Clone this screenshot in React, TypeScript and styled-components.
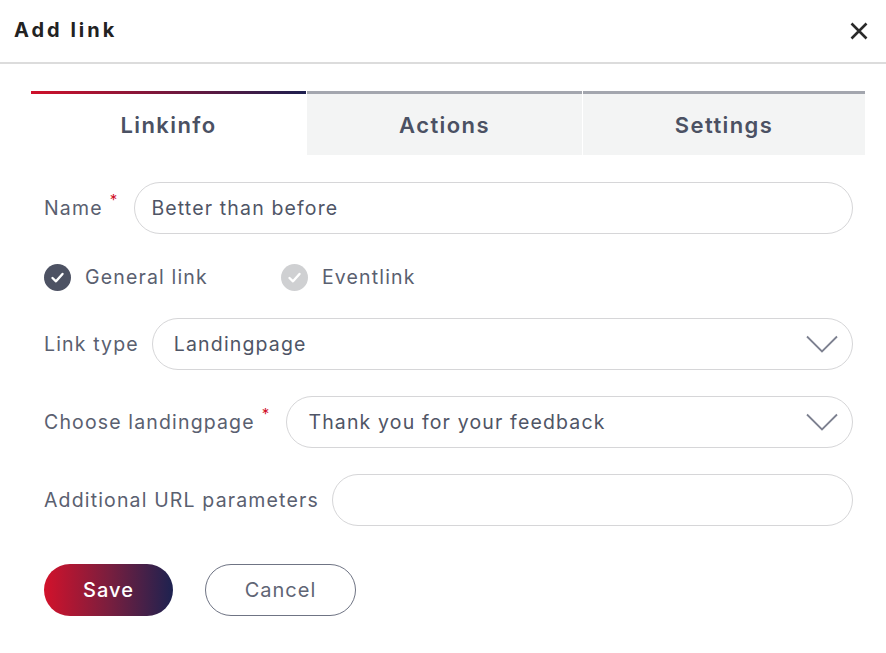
import React from 'react';
import styled, { createGlobalStyle } from 'styled-components';

const GlobalStyle = createGlobalStyle`
  body {
    margin: 0;
    background: #ffffff;
    font-family: Inter, 'Noto Sans', sans-serif;
  }
`;

const Dialog = styled.div`
  width: 886px;
  height: 653px;
  background: #fff;
`;

const Header = styled.div`
  height: 62px;
  display: flex;
  align-items: center;
  justify-content: space-between;
  padding: 0 18px 0 14px;
  border-bottom: 2px solid #dcdcdc;
`;

const Title = styled.h1`
  margin: 0 0 2px;
  font-size: 20px;
  font-weight: 700;
  letter-spacing: 3px;
  color: #222;
`;

const Close = styled.button`
  border: none;
  background: none;
  padding: 0;
  display: flex;
  cursor: pointer;
`;

const Body = styled.div`
  padding: 27px 21px 0 31px;
`;

const Tabs = styled.div`
  display: grid;
  grid-template-columns: 275px 275px 1fr;
  gap: 1px;
`;

const Tab = styled.div<{ $active?: boolean }>`
  height: 61px;
  display: flex;
  align-items: center;
  justify-content: center;
  font-size: 22px;
  font-weight: 600;
  letter-spacing: 1.4px;
  color: #4b5163;
  border-top: 3px solid #a3a6ae;
  background: ${(p) => (p.$active ? '#fff' : '#f3f4f4')};
  ${(p) =>
    p.$active &&
    `border-image: linear-gradient(90deg, #d0102a, #1c1f4f) 1;`}
`;

const Form = styled.div`
  padding: 27px 12px 0 13px;
  display: flex;
  flex-direction: column;
`;

const Row = styled.div<{ $gap?: number }>`
  display: flex;
  align-items: center;
  gap: 13px;
  margin-bottom: ${(p) => p.$gap ?? 26}px;
`;

const Label = styled.label`
  font-size: 19.5px;
  letter-spacing: 1.15px;
  color: #5a6070;
  white-space: nowrap;
  display: flex;
  align-items: flex-start;
`;

const Star = styled.span`
  color: #d0102a;
  font-size: 15px;
  margin: -6px 3px 0 7px;
`;

const Field = styled.div`
  flex: 1;
  height: 50px;
  border: 1px solid #d6d6d8;
  border-radius: 26px;
  display: flex;
  align-items: center;
  justify-content: space-between;
  padding: 0 14px 0 16px;
  font-size: 19.5px;
  letter-spacing: 1.15px;
  color: #4f5566;
`;

const SelectField = styled(Field)`
  padding-left: 21px;
`;

const Radios = styled.div`
  display: flex;
  align-items: center;
  height: 26px;
  margin: 30px 0 28px;
`;

const RadioItem = styled.div<{ $width?: number }>`
  display: flex;
  align-items: center;
  gap: 14px;
  width: ${(p) => (p.$width ? `${p.$width}px` : 'auto')};
  font-size: 19.5px;
  letter-spacing: 1.15px;
  color: #5a6070;
`;

const Buttons = styled.div`
  display: flex;
  gap: 32px;
  margin-top: 38px;
`;

const SaveButton = styled.button`
  width: 129px;
  height: 52px;
  border: none;
  border-radius: 26px;
  background: linear-gradient(90deg, #d2122b 0%, #7a1e3e 50%, #1d2250 100%);
  color: #fff;
  font-family: inherit;
  font-size: 20px;
  font-weight: 500;
  letter-spacing: 1px;
`;

const CancelButton = styled.button`
  width: 151px;
  height: 52px;
  border: 1.5px solid #6f7484;
  border-radius: 26px;
  background: #fff;
  color: #5f6575;
  font-family: inherit;
  font-size: 20px;
  letter-spacing: 1px;
`;

const Check = ({ color }: { color: string }) => (
  <svg width="27" height="27" viewBox="0 0 27 27">
    <circle cx="13.5" cy="13.5" r="13.5" fill={color} />
    <path d="M8.5 14 L12 17.3 L18.5 10" fill="none" stroke="#fff" strokeWidth="2.4" strokeLinecap="round" strokeLinejoin="round" />
  </svg>
);

const Chevron = () => (
  <svg width="32" height="18" viewBox="0 0 32 18">
    <path d="M1 1.5 L16 16.5 L31 1.5" fill="none" stroke="#7d8190" strokeWidth="1.8" />
  </svg>
);

const App = () => (
  <>
    <GlobalStyle />
    <Dialog>
      <Header>
        <Title>Add link</Title>
        <Close aria-label="Close">
          <svg width="18" height="18" viewBox="0 0 18 18">
            <path d="M1.5 1.5 L16.5 16.5 M16.5 1.5 L1.5 16.5" stroke="#2a2a2a" strokeWidth="2.6" />
          </svg>
        </Close>
      </Header>
      <Body>
        <Tabs>
          <Tab $active>Linkinfo</Tab>
          <Tab>Actions</Tab>
          <Tab>Settings</Tab>
        </Tabs>
        <Form>
          <Row $gap={0}>
            <Label>
              Name<Star>*</Star>
            </Label>
            <Field>Better than before</Field>
          </Row>
          <Radios>
            <RadioItem $width={237}>
              <Check color="#4d5263" />
              General link
            </RadioItem>
            <RadioItem>
              <Check color="#cfd0d2" />
              Eventlink
            </RadioItem>
          </Radios>
          <Row>
            <Label>Link type</Label>
            <SelectField>
              Landingpage
              <Chevron />
            </SelectField>
          </Row>
          <Row>
            <Label>
              Choose landingpage<Star>*</Star>
            </Label>
            <SelectField>
              Thank you for your feedback
              <Chevron />
            </SelectField>
          </Row>
          <Row $gap={0}>
            <Label>Additional URL parameters</Label>
            <Field />
          </Row>
          <Buttons>
            <SaveButton>Save</SaveButton>
            <CancelButton>Cancel</CancelButton>
          </Buttons>
        </Form>
      </Body>
    </Dialog>
  </>
);

export default App;
